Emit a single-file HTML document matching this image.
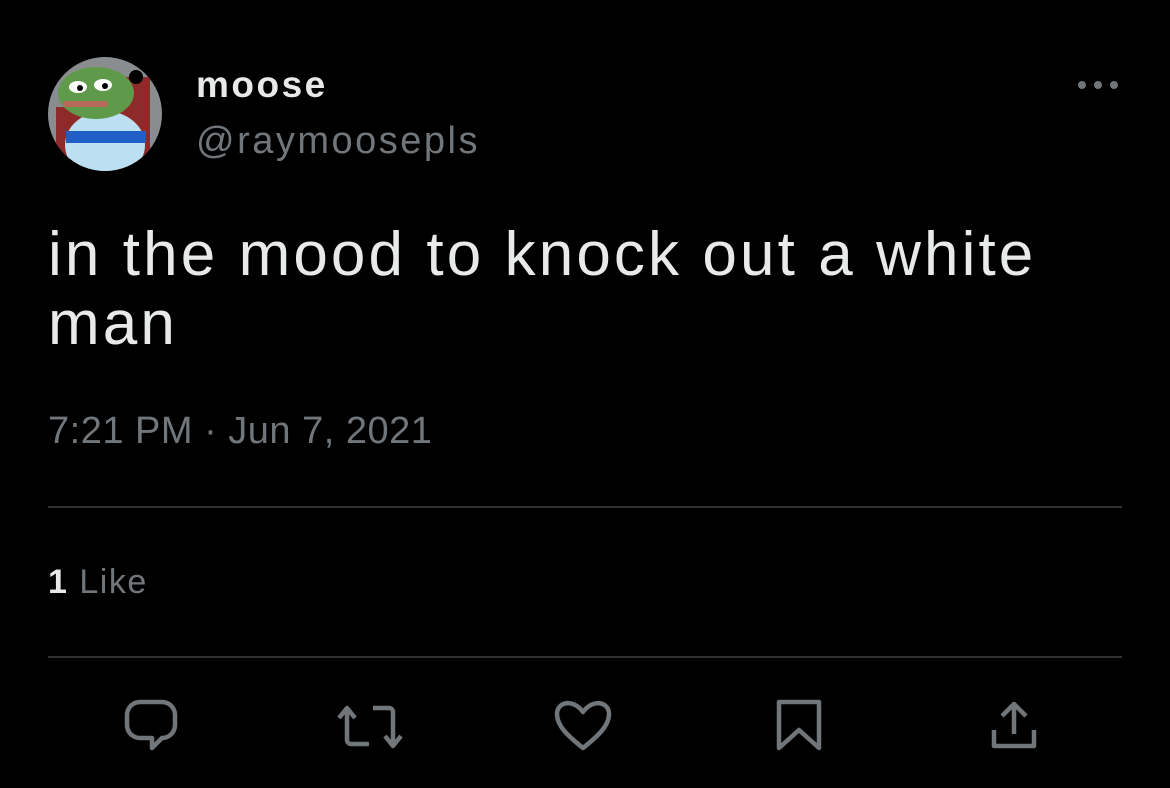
<!DOCTYPE html>
<html><head><style>
body{margin:0;width:1170px;height:788px;background:#000;overflow:hidden;font-family:"Liberation Sans",sans-serif;position:relative}
.a{position:absolute}
</style></head><body>
<svg class="a" style="left:48px;top:57px" width="114" height="114" viewBox="0 0 114 114">
<defs><clipPath id="c"><circle cx="57" cy="57" r="57"/></clipPath></defs>
<g clip-path="url(#c)">
<rect width="114" height="114" fill="#8a8d8f"/>
<rect x="62" y="20" width="40" height="90" fill="#8e2a2a"/>
<rect x="8" y="50" width="30" height="64" fill="#8e2a2a"/>
<ellipse cx="57" cy="88" rx="40" ry="34" fill="#bcdff2"/>
<rect x="18" y="74" width="80" height="12" fill="#1f5fc6"/>
<ellipse cx="48" cy="36" rx="38" ry="26" fill="#5f9a4a"/>
<ellipse cx="30" cy="30" rx="9" ry="6" fill="#fff"/><ellipse cx="55" cy="28" rx="9" ry="6" fill="#fff"/>
<circle cx="32" cy="31" r="3" fill="#000"/><circle cx="57" cy="29" r="3" fill="#000"/>
<rect x="15" y="44" width="45" height="6" rx="3" fill="#b86a5a"/>
<circle cx="88" cy="20" r="7" fill="#000"/>
</g></svg>
<div class="a" style="left:196px;top:64px;font-size:37px;font-weight:bold;color:#e7e9ea;letter-spacing:2.5px">moose</div>
<div class="a" style="left:196px;top:120px;font-size:38px;color:#71767b;letter-spacing:2.5px">@raymoosepls</div>
<svg class="a" style="left:1076px;top:78px" width="44" height="14"><circle cx="6" cy="7" r="4" fill="#71767b"/><circle cx="22" cy="7" r="4" fill="#71767b"/><circle cx="38" cy="7" r="4" fill="#71767b"/></svg>
<div class="a" style="left:48px;top:220px;font-size:62px;line-height:69px;color:#e7e9ea;width:1100px;letter-spacing:3.1px">in the mood to knock out a white<br>man</div>
<div class="a" style="left:48px;top:410px;font-size:38px;color:#71767b;letter-spacing:0.5px">7:21 PM · Jun 7, 2021</div>
<div class="a" style="left:48px;top:506px;width:1074px;height:2px;background:#2f3336"></div>
<div class="a" style="left:48px;top:563px;font-size:34px;color:#71767b;letter-spacing:1.5px"><b style="color:#e7e9ea">1</b> Like</div>
<div class="a" style="left:48px;top:656px;width:1074px;height:2px;background:#2f3336"></div>
<svg class="a" style="left:0;top:0" width="1170" height="788" fill="none" stroke="#71767b" stroke-width="4.5" stroke-linejoin="round">
<path d="M140 702 h22 a13 13 0 0 1 13 13 v10 a13 13 0 0 1 -13 13 l-10 10 v-10 h-12 a13 13 0 0 1 -13 -13 v-10 a13 13 0 0 1 13 -13z"/>
<path d="M347 708 v32 a4 4 0 0 0 4 4 h18 M339 718 l8 -10 l8 10 M373 708 h16 a4 4 0 0 1 4 4 v32 M385 736 l8 10 l8 -10"/>
<path d="M583 748 C568 736 557 726 557 714 C557 702 573 698 583 712 C593 698 609 702 609 714 C609 726 598 736 583 748z"/>
<path d="M779 702 h40 v46 l-20 -18 l-20 18z"/>
<path d="M1014 704 v30 M1002 716 l12 -12 l12 12 M994 730 v16 h40 v-16"/>
</svg>
</body></html>
